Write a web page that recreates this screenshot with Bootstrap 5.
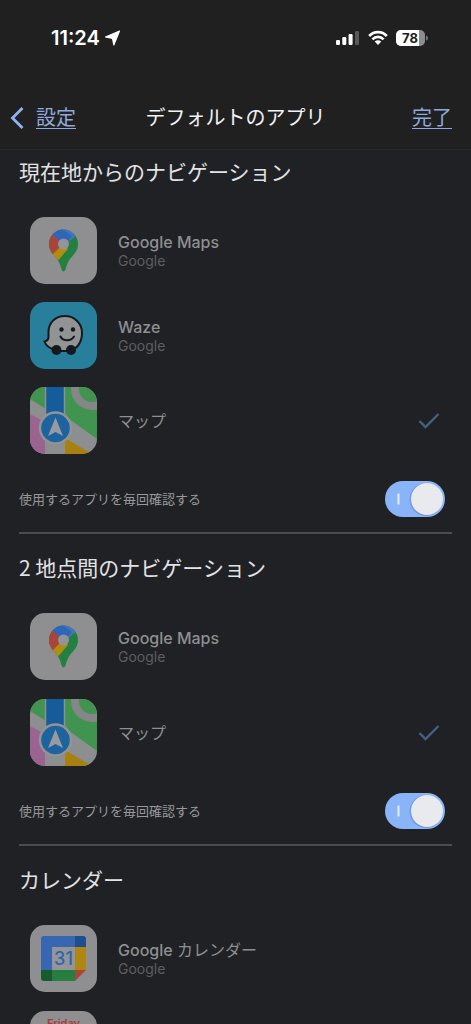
<!DOCTYPE html>
<html lang="ja">
<head>
<meta charset="utf-8">
<meta name="viewport" content="width=device-width, initial-scale=1">
<title>デフォルトのアプリ</title>
<link href="https://cdn.jsdelivr.net/npm/bootstrap@5.3.0/dist/css/bootstrap.min.css" rel="stylesheet">
<style>
  body { background: #202124; color: #e1e2e4; font-family: Inter, "Noto Sans CJK JP", sans-serif; }
  .screen { height: 100vh; }
  .top-bar { background: #202021; border-bottom: 1px solid #28292b; color: #fff; }
  .status { height: 76px; padding: 0 43px 0 51px; }
  .clock { font-size: 20px; font-weight: 600; line-height: 24px; }
  .title-bar { height: 73px; padding: 10px 10px 0; }
  .title-bar h1 { font-size: 20px; font-weight: 400; line-height: 30px; color: #f2f2f3; }
  .title-bar a { font-size: 20px; line-height: 30px; color: #8fa9dc; text-underline-offset: 3px; text-decoration-thickness: 1px; }
  .side { flex: 1 1 0; }
  .done { margin-right: 9px; }
  .group { padding: 18px 0 15px; margin: 0 19px; border-bottom: 2px solid #4b4c4f; }
  .group:first-child { padding-top: 6px; }
  .group h2 { font-family: "Noto Sans CJK JP", sans-serif; font-size: 21px; font-weight: 400; line-height: 30px; margin-bottom: 31px; }
  .apps { gap: 18px; padding: 0 12px 0 11px; margin-bottom: 27px; }
  .group + .group .apps { gap: 19px; }
  .app { gap: 21px; color: #8e8f92; }
  .app-icon { width: 67px; height: 67px; flex: none; }
  .app-name { font-size: 16px; line-height: 20px; font-weight: 500; }
  .jp { font-weight: 400; }
  .maker { font-size: 14px; line-height: 18px; color: #5d5e62; }
  .ask { height: 36px; padding-right: 7px; }
  .ask label { font-size: 13px; line-height: 20px; color: #98999c; }
  .ask .form-check-input { width: 60px; height: 36px; margin: 0; border: 0; border-radius: 18px; }
  .ask .form-check-input:checked {
    background: #8ab4f8 url("data:image/svg+xml,%3Csvg xmlns='http://www.w3.org/2000/svg' viewBox='0 0 60 36'%3E%3Ccircle cx='41' cy='18.500' r='16.500' fill='%236f9be2'/%3E%3Ccircle cx='42' cy='18' r='16' fill='%23e8eaed'/%3E%3Cpath d='M13.500 12.500v11' stroke='%23e8eaed' stroke-width='2'/%3E%3C/svg%3E") center / 100% 100% no-repeat;
  }
</style>
</head>
<body>
<svg class="position-absolute" width="0" height="0" aria-hidden="true">
  <defs>
    <clipPath id="tile"><rect width="67" height="67" rx="15"/></clipPath>
    <clipPath id="pin"><path d="M33.500 54.500C31 54.500 31.500 48 27 42C23 37 19 34 19 27A14.500 14.500 0 0 1 48 27C48 34 44 37 40 42C35.500 48 36 54.500 33.500 54.500Z"/></clipPath>
  </defs>
  <symbol id="i-gmaps" viewBox="0 0 67 67">
    <rect width="67" height="67" rx="15" fill="#8f8f91"/>
    <g clip-path="url(#pin)">
      <path d="M0 0H67V67H0Z" fill="#238041"/>
      <path d="M29 22L38 32L25 47L14 48V38Z" fill="#b08d10"/>
      <path d="M22 16L34 26L20 40L15 33V17Z" fill="#a8453b"/>
      <path d="M20 15L30 8H52L47 18L34 28Z" fill="#4475bd"/>
      <path d="M22 17L34 28L42 19L30 10Z" fill="#2e67b8"/>
    </g>
    <circle cx="33.500" cy="27" r="5.500" fill="#939499"/>
  </symbol>
  <symbol id="i-waze" viewBox="0 0 67 67">
    <rect width="67" height="67" rx="15" fill="#287f9c"/>
    <path d="M35 14C25 14 18.500 21 18.500 30V35C18.500 38 17 39 14.500 39.500C16 44 20 46.500 25 47.500L29 49H39C47 47.500 52 40 52 31C52 21 44 14 35 14Z" fill="#929395" stroke="#15191c" stroke-width="2"/>
    <circle cx="26.500" cy="48" r="5" fill="#15191c"/><circle cx="41" cy="48" r="5" fill="#15191c"/>
    <circle cx="31.500" cy="27.500" r="2.200" fill="#15191c"/><circle cx="43" cy="27.500" r="2.200" fill="#15191c"/>
    <path d="M30.500 34.500C33 39.500 41 39.500 44 34.500" fill="none" stroke="#15191c" stroke-width="2" stroke-linecap="round"/>
  </symbol>
  <symbol id="i-maps" viewBox="0 0 67 67">
    <g clip-path="url(#tile)">
      <path d="M0 0H67V67H0Z" fill="#8d8e90"/>
      <path d="M0 0H16V22L0 12Z" fill="#40944f"/>
      <path d="M35 0H67V52L35 29Z" fill="#40944f"/>
      <path d="M0 27L15 35V67H0Z" fill="#9b6490"/>
      <path d="M35 51L62 67H35Z" fill="#a78110"/>
      <circle cx="62" cy="2" r="17" fill="none" stroke="#858688" stroke-width="8"/>
      <path d="M16 0H34V34H16Z" fill="#165b9b"/>
      <path d="M15.500 0V30M34.500 0V30" stroke="#8c9091" stroke-width="1.500"/>
      <circle cx="25.500" cy="41" r="15.500" fill="#1c639f" stroke="#929395" stroke-width="2.500"/>
      <path d="M25.500 30.500L33 49L25.500 45L18 49Z" fill="#989a9d"/>
    </g>
  </symbol>
  <symbol id="i-check" viewBox="0 0 22 18"><path d="M1.500 9L7.500 15L20.500 2" fill="none" stroke="#456080" stroke-width="2.400"/></symbol>
</svg>

<div class="screen d-flex flex-column overflow-hidden">
  <header class="top-bar flex-shrink-0">
    <div class="status d-flex align-items-center justify-content-between">
      <div class="d-flex align-items-center gap-1">
        <span class="clock">11:24</span>
        <svg width="17" height="16" viewBox="0 0 16 16" aria-hidden="true"><path d="M15 1L9.300 15L8 8.500L1 7Z" fill="#fff" stroke="#fff" stroke-width="1.200" stroke-linejoin="round"/></svg>
      </div>
      <div class="d-flex align-items-center gap-2">
        <svg width="24" height="16" viewBox="0 0 24 16" aria-hidden="true"><g fill="#fff"><rect x="0" y="10" width="4" height="5" rx="1.200"/><rect x="6.300" y="7" width="4" height="8" rx="1.200"/><rect x="12.600" y="4" width="4" height="11" rx="1.200"/><rect x="19" y="1" width="4" height="14" rx="1.200" opacity=".25"/></g></svg>
        <svg width="20" height="16" viewBox="0 0 20 16" aria-hidden="true"><g fill="none" stroke="#fff" stroke-width="2.600"><path d="M1.200 6C6 .8 14 .8 18.800 6"/><path d="M4.400 9.300C7.600 6 12.400 6 15.600 9.300"/></g><path d="M6.700 11.500Q10 8.800 13.300 11.500L10 15Z" fill="#fff"/></svg>
        <svg width="32" height="16" viewBox="0 0 32 16" role="img" aria-label="78"><clipPath id="batt"><rect width="29" height="16" rx="5"/></clipPath><g clip-path="url(#batt)"><path d="M0 0H29V16H0Z" fill="#8d8d8d"/><path d="M0 0H23V16H0Z" fill="#fff"/></g><path d="M30 5.500Q32 6 32 8T30 10.500Z" fill="#777"/><text x="14" y="13" text-anchor="middle" font-size="13" font-weight="700" fill="#202021">78</text></svg>
      </div>
    </div>
    <nav class="title-bar d-flex align-items-center">
      <div class="side d-flex"><a href="#" class="d-flex align-items-center"><svg class="me-2" width="18" height="24" viewBox="0 0 18 24" aria-hidden="true"><path d="M12.500 2L2.500 12L12.500 22" fill="none" stroke="#8fb3ee" stroke-width="2.800"/></svg>設定</a></div>
      <h1 class="m-0">デフォルトのアプリ</h1>
      <div class="side d-flex justify-content-end"><a href="#" class="done">完了</a></div>
    </nav>
  </header>

  <main class="flex-grow-1 overflow-hidden">
    <section class="group">
      <h2>現在地からのナビゲーション</h2>
      <div class="apps d-flex flex-column">
        <div class="app d-flex align-items-center"><svg class="app-icon" aria-hidden="true"><use href="#i-gmaps"/></svg><div><div class="app-name">Google Maps</div><div class="maker">Google</div></div></div>
        <div class="app d-flex align-items-center"><svg class="app-icon" aria-hidden="true"><use href="#i-waze"/></svg><div><div class="app-name">Waze</div><div class="maker">Google</div></div></div>
        <div class="app d-flex align-items-center"><svg class="app-icon" aria-hidden="true"><use href="#i-maps"/></svg><div class="app-name jp">マップ</div><svg class="ms-auto" width="22" height="18" role="img" aria-label="選択中"><use href="#i-check"/></svg></div>
      </div>
      <div class="ask form-switch d-flex align-items-center justify-content-between ps-0">
        <label for="ask-here">使用するアプリを毎回確認する</label>
        <input class="form-check-input" type="checkbox" role="switch" id="ask-here" checked>
      </div>
    </section>

    <section class="group">
      <h2>2 地点間のナビゲーション</h2>
      <div class="apps d-flex flex-column">
        <div class="app d-flex align-items-center"><svg class="app-icon" aria-hidden="true"><use href="#i-gmaps"/></svg><div><div class="app-name">Google Maps</div><div class="maker">Google</div></div></div>
        <div class="app d-flex align-items-center"><svg class="app-icon" aria-hidden="true"><use href="#i-maps"/></svg><div class="app-name jp">マップ</div><svg class="ms-auto" width="22" height="18" role="img" aria-label="選択中"><use href="#i-check"/></svg></div>
      </div>
      <div class="ask form-switch d-flex align-items-center justify-content-between ps-0">
        <label for="ask-between">使用するアプリを毎回確認する</label>
        <input class="form-check-input" type="checkbox" role="switch" id="ask-between" checked>
      </div>
    </section>

    <section class="group border-0">
      <h2>カレンダー</h2>
      <div class="apps d-flex flex-column">
        <div class="app d-flex align-items-center">
          <svg class="app-icon" viewBox="0 0 67 67" role="img" aria-label="31">
            <rect width="67" height="67" rx="15" fill="#8f8f91"/>
            <path d="M14 11H45V22H22V45H11V14Q11 11 14 11Z" fill="#3866b0"/>
            <path d="M45 11H53Q56 11 56 14V22H45Z" fill="#1e4d91"/>
            <path d="M45 22H56V45H45Z" fill="#ae8611"/>
            <path d="M22 45H45V56H22Z" fill="#267f40"/>
            <path d="M11 45H22V56H14Q11 56 11 53Z" fill="#165c2f"/>
            <path d="M45 45H56L45 56Z" fill="#a64538"/>
            <path d="M22 22H45V45H22Z" fill="#949598"/>
            <text x="33.500" y="40" text-anchor="middle" font-size="18" font-weight="500" fill="#2e66ad">31</text>
          </svg>
          <div><div class="app-name">Google <span class="jp">カレンダー</span></div><div class="maker">Google</div></div>
        </div>
        <div class="app d-flex align-items-center">
          <svg class="app-icon" viewBox="0 0 67 67" role="img" aria-label="Friday">
            <rect width="67" height="67" rx="15" fill="#8f8f91"/>
            <text x="33.500" y="16" text-anchor="middle" font-size="11" font-weight="600" fill="#a83b3a">Friday</text>
          </svg>
        </div>
      </div>
    </section>
  </main>
</div>
<script src="https://cdn.jsdelivr.net/npm/bootstrap@5.3.0/dist/js/bootstrap.bundle.min.js"></script>
</body>
</html>
